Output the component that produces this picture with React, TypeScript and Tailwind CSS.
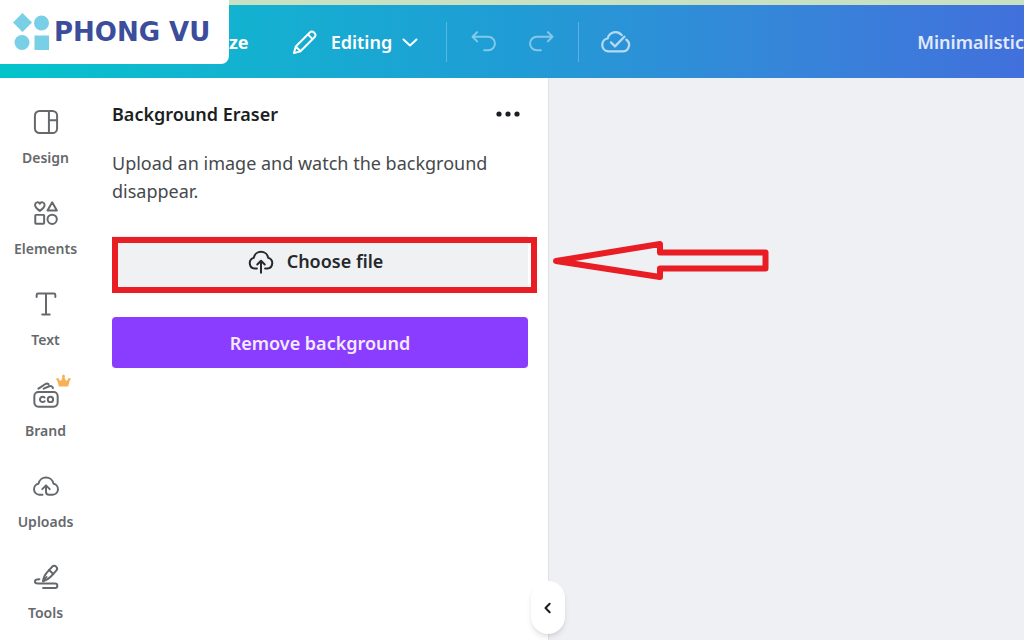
import type { ReactNode } from "react";

type IconProps = { children: ReactNode; className?: string };

function Icon({ children, className = "size-7" }: IconProps) {
  return (
    <svg
      viewBox="0 0 24 24"
      className={className}
      fill="none"
      stroke="currentColor"
      strokeWidth="1.7"
      strokeLinecap="round"
      strokeLinejoin="round"
      aria-hidden="true"
    >
      {children}
    </svg>
  );
}

const navItems: { label: string; icon: ReactNode; pro?: boolean }[] = [
  {
    label: "Design",
    icon: (
      <>
        <rect x="2.500" y="2.500" width="19" height="19" rx="4" />
        <path d="M14.500 2.500v19M14.500 10.500h7" />
      </>
    ),
  },
  {
    label: "Elements",
    icon: (
      <>
        <path d="M6.700 10.200C4.800 8.900 2.600 7.300 2.600 5.200c0-2.500 3-3.300 4.100-1.200 1.100-2.100 4.100-1.300 4.100 1.200 0 2.100-2.200 3.700-4.100 5Z" />
        <path d="M17.300 2.800 21.300 9.900h-8Z" />
        <rect x="2.800" y="13.600" width="7.600" height="7.600" rx=".6" />
        <circle cx="17.300" cy="17.400" r="4" />
      </>
    ),
  },
  {
    label: "Text",
    icon: <path d="M4 6V4.200A1.200 1.200 0 0 1 5.200 3h13.600A1.200 1.200 0 0 1 20 4.200V6M12 3v18M8.800 21h6.400" />,
  },
  {
    label: "Brand",
    pro: true,
    icon: (
      <>
        <rect x="2" y="9.500" width="20" height="12.500" rx="3.500" />
        <path d="M5.500 6.600 11.500 2.600c1-.6 2-.5 2.700.2M10 6.600l4.800-2.100c1.300-.5 2.600.1 3.200 1.600" />
        <path d="M10.800 14.200a2.300 2.300 0 1 0 0 3.200" />
        <circle cx="15.800" cy="15.800" r="2.300" />
      </>
    ),
  },
  {
    label: "Uploads",
    icon: (
      <>
        <path d="M9 19.500H6.200A4.800 4.800 0 0 1 5.600 10a6.500 6.500 0 0 1 12.800 0A4.800 4.800 0 0 1 17.800 19.500h-3.300c-1.600 0-2.500-1-2.500-2.500V12" />
        <path d="m8.800 14.700 3.200-3.200 3.200 3.200" />
      </>
    ),
  },
  {
    label: "Tools",
    icon: (
      <>
        <path d="M9.500 15.700c.2-3 1.200-5.300 3.200-7.500l4.600-5a2.400 2.400 0 0 1 3.500 3.300l-4.600 5.100c-1.800 1.900-3.900 3.400-6.700 4.100Z" />
        <path d="m14.600 6 3.700 3.500M9.500 15.700l3-3.700" />
        <path d="M6.300 14c-2.600 0-3.800.8-3.800 1.900s1 1.700 2.500 1.700h14.800a1.900 1.900 0 0 1 0 3.800H9.500" />
      </>
    ),
  },
];

function Crown() {
  return (
    <svg viewBox="0 0 16 14" className="absolute -top-[7px] left-6 h-[13px] w-[15px] text-[#f7b055]" fill="currentColor" aria-hidden="true">
      <path d="M3 13.500 1.300 7A1.400 1.400 0 1 1 3 6l2.300 1.600L7 3.600a1.600 1.600 0 1 1 2 0l1.700 4L13 6a1.400 1.400 0 1 1 1.700 1L13 13.500Z" />
    </svg>
  );
}

function BrandBadge() {
  return (
    <div className="absolute -top-[5px] left-0 flex h-16 w-[229px] items-center gap-1 rounded-br-lg bg-white pl-3">
      <svg viewBox="0 0 38 38" className="size-[38px] shrink-0" fill="#78cfe6" aria-hidden="true">
        <path d="M10.500 0 20 9.500 10.500 19 1 9.500Z" />
        <circle cx="29.500" cy="10" r="7.500" />
        <circle cx="10" cy="29.500" r="7.500" />
        <rect x="22.500" y="22.500" width="14.500" height="14.500" />
      </svg>
      <span className="whitespace-nowrap font-['DejaVu_Sans',sans-serif] text-[26px] leading-8 font-bold text-[#3b4d9b]">
        PHONG VU
      </span>
    </div>
  );
}

function Header() {
  return (
    <header className="relative border-t-[5px] border-[#c8e1c3]">
      <div className="flex h-[73px] items-center overflow-hidden bg-linear-to-r from-[#03c4cb] via-[#1f9cd5] to-[#4170dc] text-lg font-semibold text-white">
        <button type="button" className="ml-[229px] shrink-0 font-bold">
          ze
        </button>
        <button type="button" className="ml-[42px] flex shrink-0 items-center">
          <Icon className="mr-3 size-7">
            <path d="m2.500 21.500 1.600-5.600L16.300 3.700a2.200 2.200 0 0 1 3.200 0l.8.800a2.200 2.200 0 0 1 0 3.200L8.100 19.900ZM14.500 5.500l4 4M4.100 15.900l4 4" />
          </Icon>
          Editing
          <Icon className="ml-[6px] size-6">
            <path d="m5.500 9.500 6.500 6 6.500-6" strokeWidth="2" />
          </Icon>
        </button>
        <span className="ml-6 h-10 w-px shrink-0 bg-white/25" />
        <button type="button" aria-label="Undo" className="ml-[22px] shrink-0 text-white/45">
          <Icon>
            <path d="M7 3.500 3 7.500l4 4M3.500 7.500h13a5.500 5.500 0 0 1 0 11.500H13" />
          </Icon>
        </button>
        <button type="button" aria-label="Redo" className="ml-[31px] shrink-0 text-white/45">
          <Icon>
            <path d="M17 3.500 21 7.500l-4 4M20.500 7.500h-13a5.500 5.500 0 0 0 0 11.500H11" />
          </Icon>
        </button>
        <span className="ml-[22px] h-10 w-px shrink-0 bg-white/25" />
        <button type="button" aria-label="Saved" className="ml-5 shrink-0 text-white/65">
          <Icon className="size-8">
            <path d="M17 6.800A6 6 0 0 0 6.500 9.300 4.900 4.900 0 0 0 6.800 19h10.600a4.800 4.800 0 0 0 3.100-8.700M9 12.300l3 3 7-7.300" />
          </Icon>
        </button>
        <span className="ml-auto shrink-0 text-white/85">Minimalistic</span>
      </div>
      <BrandBadge />
    </header>
  );
}

function PointerArrow() {
  return (
    <svg
      viewBox="0 0 218 42"
      className="pointer-events-none absolute left-[440px] top-1 h-[42px] w-[218px]"
      fill="none"
      stroke="#e91d24"
      strokeWidth="6"
      strokeLinejoin="round"
      aria-hidden="true"
    >
      <path d="M4 21 108 4v8.500H213.500V28.500H108V37Z" />
    </svg>
  );
}

export default function App() {
  return (
    <div className="flex min-h-screen flex-col overflow-x-hidden bg-white font-['Noto_Sans',sans-serif]">
      <Header />
      <div className="flex flex-1">
        <nav className="w-[91px] shrink-0 pt-[30px]">
          <ul className="flex flex-col gap-[29px]">
            {navItems.map((item) => (
              <li key={item.label}>
                <a href="#" className="flex flex-col items-center gap-[10px] text-sm leading-6 font-semibold text-[#66696c]">
                  <span className="relative">
                    <Icon>{item.icon}</Icon>
                    {item.pro && <Crown />}
                  </span>
                  {item.label}
                </a>
              </li>
            ))}
          </ul>
        </nav>

        <section className="relative z-10 w-[458px] shrink-0 border-r border-[#e0e2e6] pl-[21px] pr-5 pt-[22px]">
          <div className="flex items-center justify-between pr-1.5">
            <h1 className="text-lg leading-7 font-semibold text-[#1b1f23]">Background Eraser</h1>
            <button type="button" aria-label="More options">
              <svg viewBox="0 0 28 28" className="size-7" fill="#1b1f23" aria-hidden="true">
                <circle cx="5" cy="14" r="2.600" />
                <circle cx="14" cy="14" r="2.600" />
                <circle cx="23" cy="14" r="2.600" />
              </svg>
            </button>
          </div>
          <p className="mt-[21px] text-lg leading-7 text-[#45494d]">
            Upload an image and watch the background disappear.
          </p>
          <div className="relative mt-[31px]">
            <button
              type="button"
              className="flex h-[51px] w-full items-center justify-center gap-3 bg-[#f0f1f2] pr-[10px] pb-0.5 text-lg font-semibold text-[#25292d]"
            >
              <Icon>
                <path d="M8.500 18.500H6.600a4.700 4.700 0 0 1-.8-9.200 6.300 6.300 0 0 1 12.400 0 4.700 4.700 0 0 1-.8 9.200H15.500" />
                <path d="M12 22v-10M8.800 15l3.200-3.200 3.200 3.200" />
              </Icon>
              Choose file
            </button>
            <div className="pointer-events-none absolute -right-[9px] -bottom-[6px] left-0 top-px border-6 border-[#e91d24]" />
            <PointerArrow />
          </div>
          <button
            type="button"
            className="mt-[30px] h-[51px] w-full rounded bg-[#8b3dff] text-lg font-semibold text-[#f3eaff]"
          >
            Remove background
          </button>
          <button
            type="button"
            aria-label="Collapse panel"
            className="absolute -right-[17px] bottom-[6px] flex h-[53px] w-[34px] items-center justify-center rounded-full bg-white text-[#1b1f23] shadow-md"
          >
            <Icon className="size-5">
              <path d="m14 7-5 5 5 5" strokeWidth="2.500" />
            </Icon>
          </button>
        </section>

        <main className="min-w-0 flex-1 bg-[#eff0f3]" />
      </div>
    </div>
  );
}
